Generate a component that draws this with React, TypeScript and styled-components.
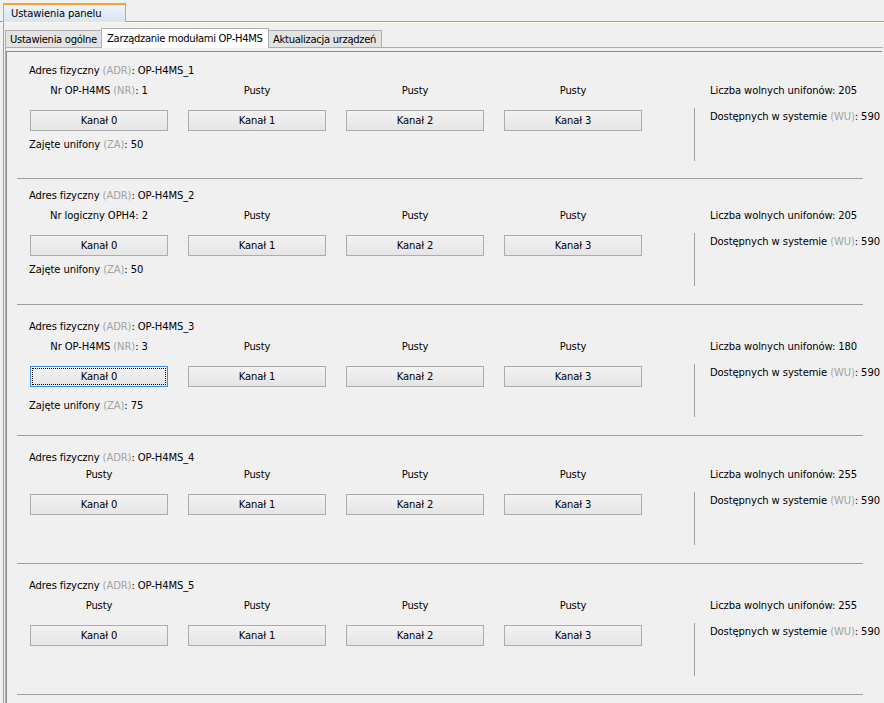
import styled, { createGlobalStyle } from "styled-components";

const GlobalStyle = createGlobalStyle`
  html, body {
    margin: 0;
    padding: 0;
    background: #f0f0f0;
  }
  body {
    font-family: "DejaVu Sans", "Liberation Sans", sans-serif;
    font-size: 10px;
    letter-spacing: -0.1px;
    color: #000;
  }
`;

type Module = {
  adr: string;
  label: string;
  gray?: string;
  value?: string;
  occupied?: number;
  free: number;
  focused?: boolean;
  pt: number;
  h: number;
  labelGap?: number;
  occGap?: number;
};

const modules: Module[] = [
  { adr: "OP-H4MS_1", label: "Nr OP-H4MS", gray: "NR", value: "1", occupied: 50, free: 205, pt: 11, h: 126 },
  { adr: "OP-H4MS_2", label: "Nr logiczny OPH4", value: "2", occupied: 50, free: 205, pt: 9, h: 125 },
  { adr: "OP-H4MS_3", label: "Nr OP-H4MS", gray: "NR", value: "3", occupied: 75, free: 180, focused: true, pt: 14, h: 130, occGap: 11 },
  { adr: "OP-H4MS_4", label: "Pusty", free: 255, pt: 14, h: 127, labelGap: 1 },
  { adr: "OP-H4MS_5", label: "Pusty", free: 255, pt: 14, h: 130 },
];

function Labeled({ text, gray, value }: { text: string; gray?: string; value?: string }) {
  if (value === undefined) return <>{text}</>;
  return (
    <>
      {text}
      {gray && (
        <>
          {" "}
          <Gray>({gray})</Gray>
        </>
      )}
      : {value}
    </>
  );
}

function ModuleSection({ m }: { m: Module }) {
  const labelGap = m.labelGap ?? 4;
  return (
    <Section $pt={m.pt} $h={m.h}>
      <LeftCol>
        <Line>
          Adres fizyczny <Gray>(ADR)</Gray>: {m.adr}
        </Line>
        <Channels $gap={labelGap}>
          <ColLabel>
            <Labeled text={m.label} gray={m.gray} value={m.value} />
          </ColLabel>
          <ColLabel>Pusty</ColLabel>
          <ColLabel>Pusty</ColLabel>
          <ColLabel>Pusty</ColLabel>
          {[0, 1, 2, 3].map((i) => (
            <Button key={i} $focused={m.focused && i === 0}>
              Kanał {i}
            </Button>
          ))}
        </Channels>
        {m.occupied !== undefined && (
          <Occupied $gap={m.occGap ?? 6}>
            Zajęte unifony <Gray>(ZA)</Gray>: {m.occupied}
          </Occupied>
        )}
      </LeftCol>
      <RightCol $pt={16 + labelGap}>
        <FreeLine>Liczba wolnych unifonów: {m.free}</FreeLine>
        <SystemBox>
          <Line>
            Dostępnych w systemie <Gray>(WU)</Gray>: 590
          </Line>
        </SystemBox>
      </RightCol>
    </Section>
  );
}

export default function App() {
  return (
    <>
      <GlobalStyle />
      <Window>
        <OuterTabBar>
          <OuterTab>Ustawienia panelu</OuterTab>
        </OuterTabBar>
        <OuterBody>
          <InnerTabBar>
            <InnerTab $w={97}>Ustawienia ogólne</InnerTab>
            <InnerTab $w={168} $active>
              Zarządzanie modułami OP-H4MS
            </InnerTab>
            <InnerTab $w={114}>Aktualizacja urządzeń</InnerTab>
          </InnerTabBar>
          <InnerBody>
            <ScrollArea>
              {modules.map((m) => (
                <ModuleSection key={m.adr} m={m} />
              ))}
            </ScrollArea>
          </InnerBody>
        </OuterBody>
      </Window>
    </>
  );
}

const Window = styled.div`
  height: 703px;
  display: flex;
  flex-direction: column;
  padding-top: 3px;
  box-sizing: border-box;
  overflow: hidden;
`;

const OuterTabBar = styled.div`
  display: flex;
  padding-left: 3px;
  border-bottom: 1px solid #8aa4c4;
`;

const OuterTab = styled.div`
  width: 114px;
  height: 17px;
  line-height: 18px;
  padding-left: 7px;
  border: 1px solid #9bb0c8;
  border-top: 2px solid #f4a431;
  border-bottom: none;
  background: linear-gradient(#edf3fb, #d8e4f3);
  margin-bottom: -1px;
`;

const OuterBody = styled.div`
  flex: 1;
  margin-left: 3px;
  border-left: 1px solid #8aa4c4;
  border-top: 1px solid #fbf8ea;
  padding: 4px 1px 0 1px;
  display: flex;
  flex-direction: column;
`;

const InnerTabBar = styled.div`
  display: flex;
  align-items: flex-end;
  height: 20px;
  border-bottom: 1px solid #adadad;
`;

const InnerTab = styled.div<{ $active?: boolean; $w: number }>`
  width: ${(p) => p.$w}px;
  height: ${(p) => (p.$active ? 20 : 17)}px;
  line-height: ${(p) => (p.$active ? 19 : 17)}px;
  padding-left: ${(p) => (p.$active ? 5 : 4)}px;
  border: 1px solid #adadad;
  border-bottom: none;
  background: ${(p) => (p.$active ? "#ffffff" : "#e3e3e3")};
  margin-bottom: ${(p) => (p.$active ? -1 : 0)}px;
  margin-left: ${(p) => (p.$active ? -1 : 0)}px;
  margin-right: ${(p) => (p.$active ? -1 : 0)}px;
  box-sizing: border-box;
  white-space: nowrap;
  letter-spacing: -0.3px;
  overflow: hidden;
  position: relative;
`;

const InnerBody = styled.div`
  flex: 1;
  border-left: 1px solid #adadad;
  padding: 3px 1px 0 0;
  display: flex;
  flex-direction: column;
`;

const ScrollArea = styled.div`
  flex: 1;
  border-top: 1px solid #8c8c8c;
  border-left: 1px solid #8c8c8c;
  padding: 0 19px 0 10px;
`;

const Section = styled.div<{ $pt: number; $h: number }>`
  display: flex;
  height: ${(p) => p.$h - p.$pt}px;
  padding: ${(p) => p.$pt}px 0 0 12px;
  border-bottom: 1px solid #a0a0a0;
`;

const LeftCol = styled.div`
  flex: 0 0 633px;
  display: flex;
  flex-direction: column;
`;

const Line = styled.div`
  height: 16px;
  line-height: 16px;
  white-space: nowrap;
`;

const FreeLine = styled(Line)`
  padding-left: 16px;
`;

const Gray = styled.span`
  color: #a3a3a3;
`;

const Channels = styled.div<{ $gap: number }>`
  display: grid;
  grid-template-columns: repeat(4, 138px);
  column-gap: 20px;
  row-gap: 11px;
  margin-top: ${(p) => p.$gap}px;
  padding-left: 1px;
`;

const ColLabel = styled.div`
  height: 16px;
  line-height: 16px;
  text-align: center;
  white-space: nowrap;
`;

const Button = styled.div<{ $focused?: boolean }>`
  height: 21px;
  line-height: 19px;
  box-sizing: border-box;
  text-align: center;
  border: 1px solid ${(p) => (p.$focused ? "#3c8fd8" : "#acacac")};
  background: linear-gradient(#f2f2f2, #e5e5e5);
  outline: ${(p) => (p.$focused ? "1px dotted #000" : "none")};
  outline-offset: -3px;
`;

const Occupied = styled.div<{ $gap: number }>`
  height: 16px;
  line-height: 16px;
  margin-top: ${(p) => p.$gap}px;
  white-space: nowrap;
`;

const RightCol = styled.div<{ $pt: number }>`
  margin-left: 32px;
  padding-top: ${(p) => p.$pt}px;
  display: flex;
  flex-direction: column;
`;

const SystemBox = styled.div`
  margin-top: 9px;
  height: 53px;
  box-sizing: border-box;
  border-left: 1px solid #a0a0a0;
  padding: 1px 0 0 15px;
`;
